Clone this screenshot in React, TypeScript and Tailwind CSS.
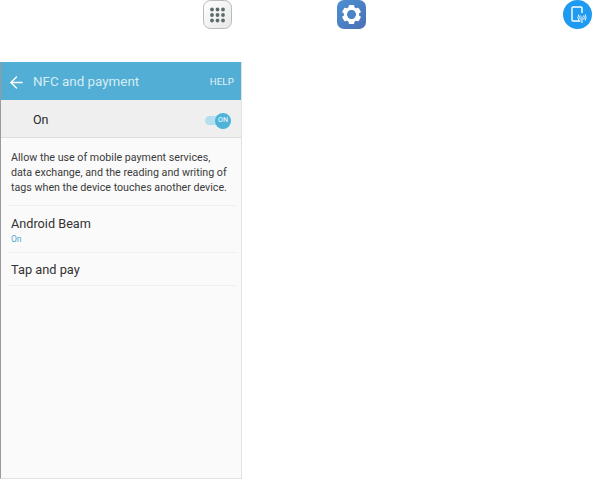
import { ArrowLeft } from 'lucide-react';

function AppsIcon() {
  const dots = [10, 15.5, 21];
  return (
    <div className="w-[29px] h-[29px]">
      <svg width="29" height="29" viewBox="0 0 29 29">
        <defs>
          <linearGradient id="appsBg" x1="0" y1="0" x2="1" y2="1">
            <stop offset="0" stopColor="#ffffff" />
            <stop offset="1" stopColor="#e6e7e7" />
          </linearGradient>
        </defs>
        <rect x="0.5" y="0.5" width="28" height="28" rx="7" fill="url(#appsBg)" stroke="#a9abab" strokeWidth="0.8" />
        {dots.map((y) =>
          [9, 14.5, 20].map((x) => <circle key={`${x}-${y}`} cx={x} cy={y - 0.5} r="1.9" fill="#5f6b6b" />)
        )}
      </svg>
    </div>
  );
}

function SettingsIcon() {
  return (
    <svg width="29" height="29" viewBox="0 0 29 29">
      <defs>
        <linearGradient id="settingsBg" x1="0" y1="0" x2="1" y2="1">
          <stop offset="0" stopColor="#4a90d2" />
          <stop offset="1" stopColor="#4d6fb5" />
        </linearGradient>
      </defs>
      <rect width="29" height="29" rx="7" fill="url(#settingsBg)" />
      <g fill="#ffffff">
        {[0, 60, 120, 180, 240, 300].map((a) => (
          <rect key={a} x="11.7" y="5" width="5.6" height="5" rx="1" transform={`rotate(${a} 14.5 14.5)`} />
        ))}
      </g>
      <circle cx="14.5" cy="14.5" r="6.1" fill="none" stroke="#ffffff" strokeWidth="3.2" />
      <circle cx="14.5" cy="14.5" r="4.2" fill="#4a84c8" />
    </svg>
  );
}

function NfcIcon() {
  return (
    <svg width="29" height="29" viewBox="0 0 29 29">
      <circle cx="14.5" cy="14.5" r="14.5" fill="#1e9bf0" />
      <path d="M17.5 21H10a1 1 0 0 1-1-1V8a1 1 0 0 1 1-1h8a1 1 0 0 1 1 1v5" fill="none" stroke="#ffffff" strokeWidth="1.4" />
      <path d="M19 16.5V23" stroke="#ffffff" strokeWidth="1" />
      <path d="M17.3 15.5a4 4 0 0 0 0 4M20.7 15.5a4 4 0 0 1 0 4" fill="none" stroke="#ffffff" strokeWidth="1" />
      <path d="M15.8 14.5a6 6 0 0 0 0 6M22.2 14.5a6 6 0 0 1 0 6" fill="none" stroke="#ffffff" strokeWidth="0.9" />
    </svg>
  );
}

export default function App() {
  return (
    <div className="w-[592px] h-[479px] bg-white overflow-hidden font-['Roboto',sans-serif]">
      {/* Top icons */}
      <div className="h-[62px] flex items-start pl-[203px]">
        <AppsIcon />
        <div className="ml-[105px]">
          <SettingsIcon />
        </div>
        <div className="ml-[197px]">
          <NfcIcon />
        </div>
      </div>

      {/* Phone screen */}
      <div className="w-[242px] h-[417px] flex flex-col bg-[#fafafa] border-l border-r border-b border-l-[#9a9a9a] border-r-[#e2e2e2] border-b-[#e2e2e2]">
        <div className="h-[38px] shrink-0 bg-[#52aed4] flex items-center pt-[3px] pl-[6px] pr-[7px] text-white">
          <ArrowLeft className="w-[19px] h-[19px]" strokeWidth={1.8} />
          <span className="ml-[7px] text-[13.4px] text-[#d5edf6]">NFC and payment</span>
          <span className="ml-auto text-[9.6px] tracking-[0.2px] text-[#e3f2f8]">HELP</span>
        </div>

        <div className="h-[38px] shrink-0 bg-[#efefef] border-b border-[#dcdcdc] flex items-center pt-[3px] pl-[32px] pr-[10px]">
          <span className="text-[12.5px] text-[#2b2b2b]">On</span>
          <div className="ml-auto relative w-[26px] h-[9px] rounded-full bg-[#b5dfee]">
            <div className="absolute right-0 top-[-3px] w-[16px] h-[16px] rounded-full bg-[#4fb3d9] flex items-center justify-center text-[7px] leading-none text-white">
              ON
            </div>
          </div>
        </div>

        <div className="pl-[7px] pr-[4px]">
          <p className="pl-[3px] pt-[12px] pb-[10px] border-b border-[#f0f0f0] text-[10.7px] leading-[15px] text-[#3a3a3a]">
            Allow the use of mobile payment services,
            <br />
            data exchange, and the reading and writing of
            <br />
            tags when the device touches another device.
          </p>
          <div className="h-[47px] pl-[3px] pt-[9px] border-b border-[#f0f0f0]">
            <div className="text-[12.7px] leading-[18px] text-[#333333]">Android Beam</div>
            <div className="text-[8.5px] leading-[12px] text-[#4fa9cf]">On</div>
          </div>
          <div className="h-[33px] pl-[3px] pt-[2px] flex items-center border-b border-[#f0f0f0]">
            <span className="text-[12.8px] text-[#333333]">Tap and pay</span>
          </div>
        </div>
      </div>
    </div>
  );
}
